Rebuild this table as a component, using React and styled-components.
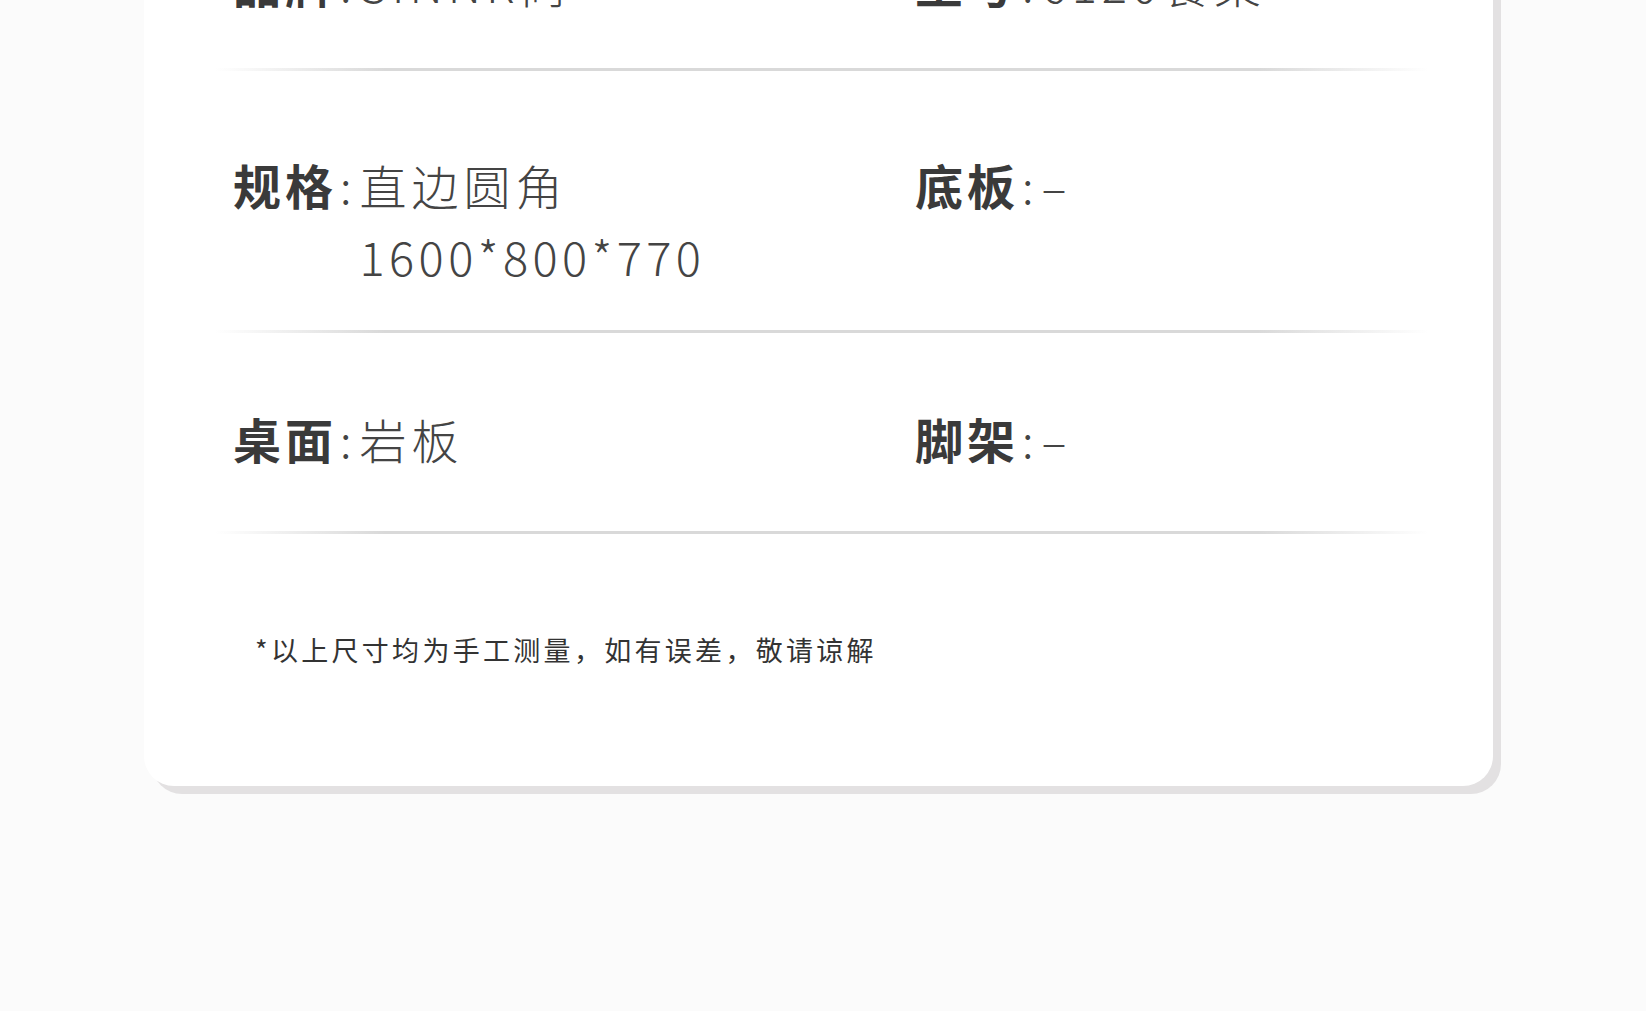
import React from 'react'
import styled, { createGlobalStyle } from "styled-components";

const GlobalStyle = createGlobalStyle`
html, body {
  margin:0;
  padding:0;
  background:#fbfbfb;
}
body {
  font-family:"Noto Sans CJK SC", "Noto Sans", sans-serif;
}
`;

const Page = styled.div`
min-height:100vh;
box-sizing:border-box;
overflow:hidden;
padding:0 153px 0 144px;
background:#fbfbfb;
`;

const Card = styled.div`
margin-top:-93px;
background:#fff;
border-radius:30px;
box-shadow:8px 8px 0 0 #e3e1e2;
padding:0 65px 116px 71px;
`;

const Row = styled.div`
display:grid;
grid-template-columns:682px 1fr;
padding:${p => p.$top}px 0 ${p => p.$bottom}px 18px;
`;

const Divider = styled.div`
height:3px;
background:linear-gradient(90deg, rgba(217,217,217,0) 0%, #d9d9d9 14%, #d9d9d9 86%, rgba(217,217,217,0) 100%);
`;

const Field = styled.div`
display:flex;
align-items:flex-start;
line-height:71px;
`;

const Label = styled.span`
font-size:48px;
font-weight:700;
color:#3a3a3a;
letter-spacing:4px;
white-space:nowrap;
`;

const Colon = styled.span`
font-size:46px;
font-weight:300;
color:#444;
margin:0 8px 0 3px;
`;

const Value = styled.div`
display:flex;
flex-direction:column;
font-size:47px;
font-weight:300;
color:#444;
letter-spacing:5px;
white-space:nowrap;
`;

const Line = styled.span`
letter-spacing:${p => (p.$digits ? '4.4px' : 'inherit')};
`;

const Note = styled.p`
margin:0;
padding:96px 0 0 40px;
font-size:27px;
line-height:40px;
letter-spacing:3.3px;
color:#333;
`;

const rows = [
  { top: 40, bottom: 50, left: ['品牌', ['SINNR尚']], right: ['型号', ['6120餐桌']] },
  { top: 78, bottom: 39, left: ['规格', ['直边圆角', '1600*800*770']], right: ['底板', ['–']] },
  { top: 70, bottom: 57, left: ['桌面', ['岩板']], right: ['脚架', ['–']] },
];

function Item({ label, lines }) {
  return (
    <Field>
      <Label>{label}</Label>
      <Colon>:</Colon>
      <Value>
        {lines.map(l => <Line key={l} $digits={/^[\d*]+$/.test(l)}>{l}</Line>)}
      </Value>
    </Field>
  )
}

function App() {
  return (
    <>
      <GlobalStyle />
      <Page>
        <Card>
          {rows.map(r => (
            <React.Fragment key={r.left[0]}>
              <Row $top={r.top} $bottom={r.bottom}>
                <Item label={r.left[0]} lines={r.left[1]} />
                <Item label={r.right[0]} lines={r.right[1]} />
              </Row>
              <Divider />
            </React.Fragment>
          ))}
          <Note>*以上尺寸均为手工测量，如有误差，敬请谅解</Note>
        </Card>
      </Page>
    </>
  )
}

export default App
